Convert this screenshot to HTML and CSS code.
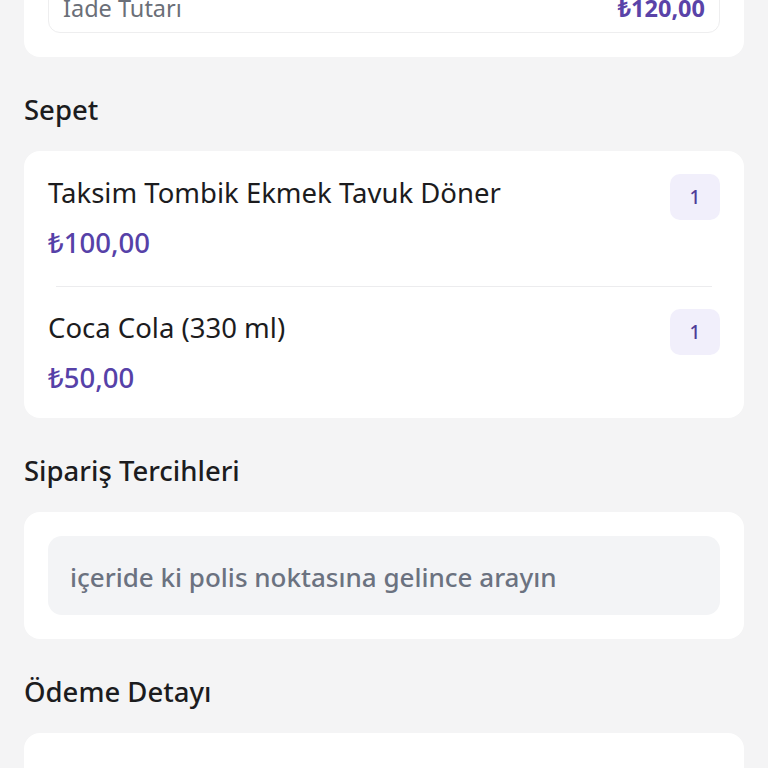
FILE: index.html
```html
<!DOCTYPE html>
<html lang="tr">
<head>
<meta charset="utf-8">
<link rel="stylesheet" href="styles.css">
</head>
<body>
<main class="page">
  <section class="card card-top">
    <div class="refund-box">
      <span class="refund-label">İade Tutarı</span>
      <span class="refund-value">₺120,00</span>
    </div>
  </section>

  <h2 class="section-title">Sepet</h2>
  <section class="card card-cart">
    <div class="item">
      <div class="item-info">
        <div class="item-name">Taksim Tombik Ekmek Tavuk Döner</div>
        <div class="item-price">₺100,00</div>
      </div>
      <div class="qty">1</div>
    </div>
    <div class="divider"></div>
    <div class="item item-last">
      <div class="item-info">
        <div class="item-name">Coca Cola (330 ml)</div>
        <div class="item-price">₺50,00</div>
      </div>
      <div class="qty">1</div>
    </div>
  </section>

  <h2 class="section-title">Sipariş Tercihleri</h2>
  <section class="card card-pad">
    <div class="note">içeride ki polis noktasına gelince arayın</div>
  </section>

  <h2 class="section-title">Ödeme Detayı</h2>
  <section class="card card-pad card-payment">
  </section>
</main>
</body>
</html>
```

FILE: styles.css
```css
* { box-sizing: border-box; }
html, body {
  margin: 0;
  padding: 0;
  background: #f4f4f5;
  font-family: "Noto Sans", "Open Sans", sans-serif;
  color: #1c1c1e;
  overflow: hidden;
  height: 768px;
}
.page {
  padding: 0 24px;
}
.card {
  background: #ffffff;
  border-radius: 16px;
}
.card-top {
  margin-top: -41px;
  padding: 24px;
}
.refund-box {
  display: flex;
  justify-content: space-between;
  align-items: center;
  border: 1px solid #eeeeef;
  border-radius: 12px;
  padding: 7px 14px;
  line-height: 34px;
}
.refund-label {
  font-size: 23.5px;
  color: #6b6f78;
}
.refund-value {
  font-size: 23.5px;
  font-weight: 700;
  color: #5a43a8;
}
.section-title {
  margin: 0;
  padding: 36px 0 24px;
  font-size: 27.5px;
  line-height: 34px;
  font-weight: 500;
  color: #1c1c1e;
}
.card-cart {
  padding: 0;
}
.item {
  display: flex;
  justify-content: space-between;
  align-items: flex-start;
  padding: 23px 24px 24px;
}
.item-last {
  padding-top: 22px;
  padding-bottom: 21px;
}
.item-name {
  font-size: 27.5px;
  line-height: 38px;
  color: #1c1c1e;
}
.item-price {
  margin-top: 12px;
  font-size: 27.5px;
  line-height: 38px;
  font-weight: 500;
  color: #5641a8;
}
.qty {
  width: 50px;
  height: 46px;
  border-radius: 10px;
  background: #f1effb;
  color: #4f3c98;
  font-size: 19px;
  font-weight: 500;
  display: flex;
  align-items: center;
  justify-content: center;
}
.divider {
  height: 1px;
  background: #ececee;
  margin: 0 32px;
}
.card-pad {
  padding: 24px;
}
.note {
  background: #f3f4f6;
  border-radius: 14px;
  padding: 2px 22px 0;
  height: 79px;
  display: flex;
  align-items: center;
  font-size: 26px;
  font-weight: 500;
  color: #6b7280;
}
.card-payment {
  height: 120px;
}
```
